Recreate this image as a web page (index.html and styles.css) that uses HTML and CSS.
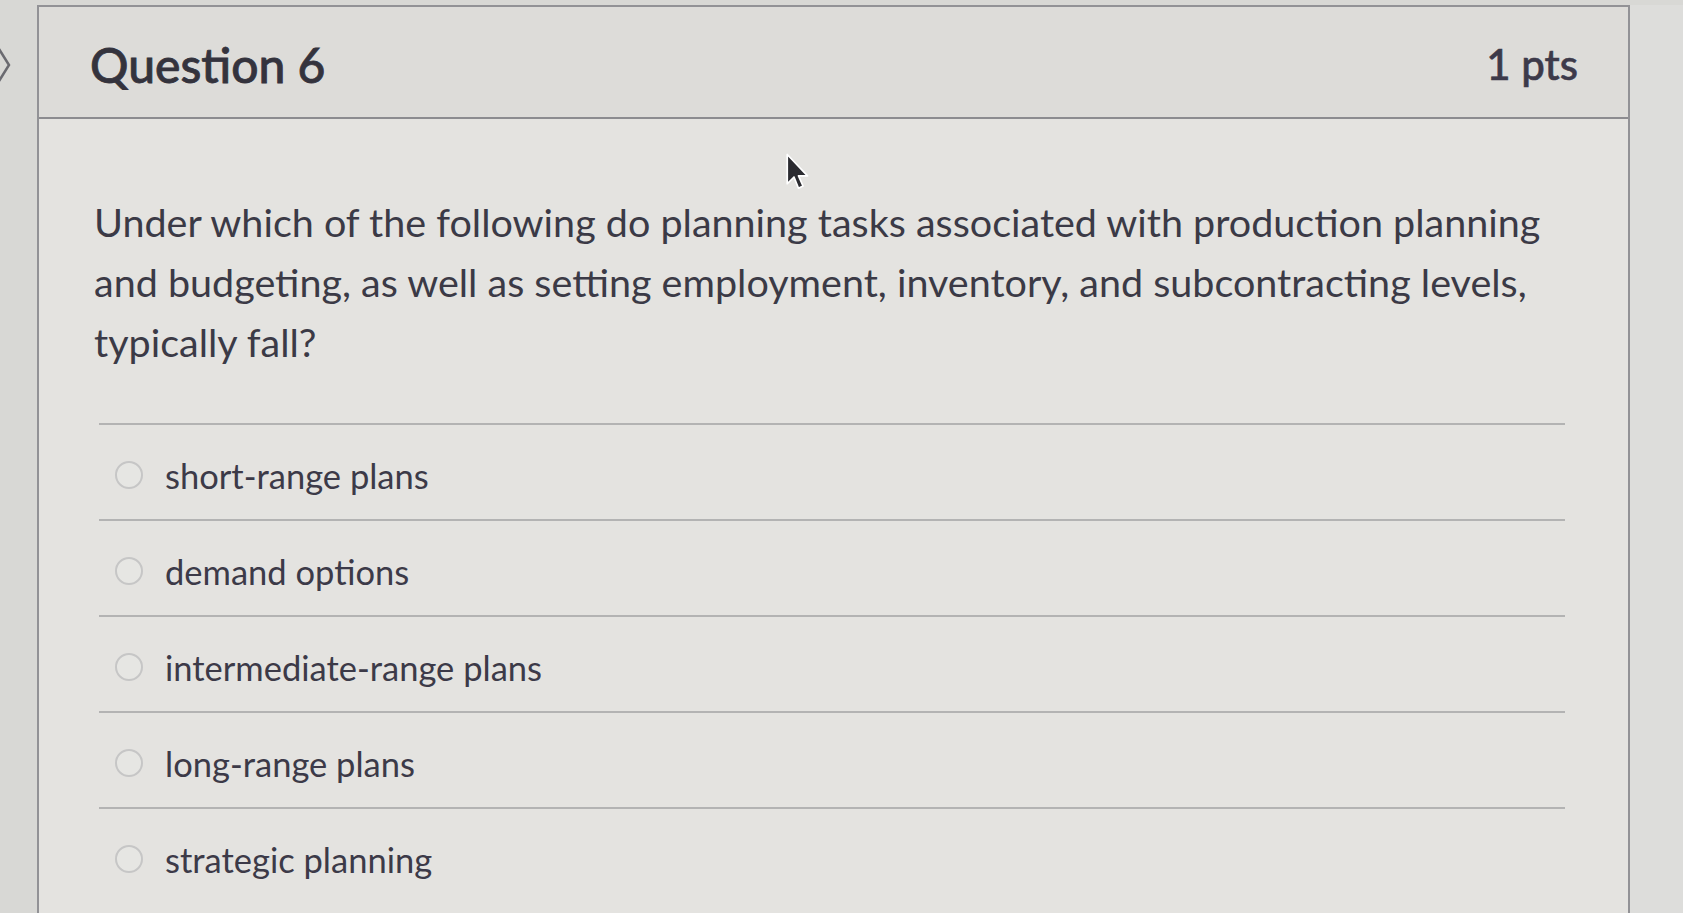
FILE: index.html
```html
<!DOCTYPE html>
<html>
<head>
<meta charset="utf-8">
<link rel="stylesheet" href="styles.css">
</head>
<body>
<div class="page">
  <div class="side">
    <svg class="chev" width="14" height="36" viewBox="0 0 14 36"><path d="M1 2 L11 18 L1 34" fill="none" stroke="#6a6a70" stroke-width="2.5"/></svg>
  </div>
  <div class="card">
    <div class="header">
      <div class="title">Question 6</div>
      <div class="pts">1 pts</div>
    </div>
    <div class="body">
      <div class="qtext">Under which of the following do planning tasks associated with production planning and budgeting, as well as setting employment, inventory, and subcontracting levels, typically fall?</div>
      <div class="answers">
        <div class="answer"><span class="radio"></span><span class="label">short-range plans</span></div>
        <div class="answer"><span class="radio"></span><span class="label">demand options</span></div>
        <div class="answer"><span class="radio"></span><span class="label">intermediate-range plans</span></div>
        <div class="answer"><span class="radio"></span><span class="label">long-range plans</span></div>
        <div class="answer"><span class="radio"></span><span class="label">strategic planning</span></div>
      </div>
    </div>
  </div>
  <div class="right"></div>
  <svg class="cursor" width="27" height="41" viewBox="0 0 24 36"><path d="M2 2 L2 28 L8 22 L12 32 L16 30 L12 21 L20 21 Z" fill="#2b2b30" stroke="#ffffff" stroke-width="1.5" stroke-linejoin="round"/></svg>
</div>
</body>
</html>
```
FILE: styles.css
```css
html, body {
  margin: 0;
  padding: 0;
  background: #d8d8d5;
  width: 1683px;
  height: 913px;
  overflow: hidden;
  font-family: Lato, "Open Sans", sans-serif;
  color: #3a3944;
}
.page {
  position: relative;
  display: flex;
  width: 1683px;
  height: 913px;
  padding-top: 5px;
  box-sizing: border-box;
}
.side {
  width: 37px;
  flex: none;
  padding-top: 42px;
  box-sizing: border-box;
}
.chev {
  display: block;
  margin-left: -2px;
}
.card {
  width: 1593px;
  flex: none;
  border: 2px solid #929296;
  border-bottom: none;
  background: #e4e3e0;
  box-sizing: border-box;
}
.right {
  flex: 1;
  background: #dddddb;
}
.header {
  display: flex;
  justify-content: space-between;
  align-items: center;
  height: 112px;
  padding: 4px 50px 0 51px;
  box-sizing: border-box;
  background: #dddcd9;
  border-bottom: 2px solid #8c8c90;
}
.title {
  font-size: 48px;
  font-weight: 500;
  color: #34333d;
  -webkit-text-stroke: 0.8px #34333d;
}
.pts {
  font-size: 42px;
  font-weight: 500;
  color: #3d3a4a;
  -webkit-text-stroke: 0.6px #3d3a4a;
}
.body {
  padding: 73px 63px 0 55px;
}
.qtext {
  font-size: 39.5px;
  line-height: 60px;
  color: #3b3a46;
  padding-right: 12px;
}
.answers {
  margin-top: 51px;
  margin-left: 5px;
}
.answer {
  display: flex;
  align-items: center;
  height: 96px;
  border-top: 2px solid #b3b3b3;
  box-sizing: border-box;
  padding: 6px 0 0 16px;
}
.radio {
  width: 28px;
  height: 28px;
  border-radius: 50%;
  border: 2px solid #c6c6c6;
  background: #e6e6e3;
  box-sizing: border-box;
  flex: none;
}
.label {
  margin-left: 22px;
  font-size: 34.5px;
  color: #3c3a48;
}
.cursor {
  position: absolute;
  left: 785px;
  top: 152px;
}
```
